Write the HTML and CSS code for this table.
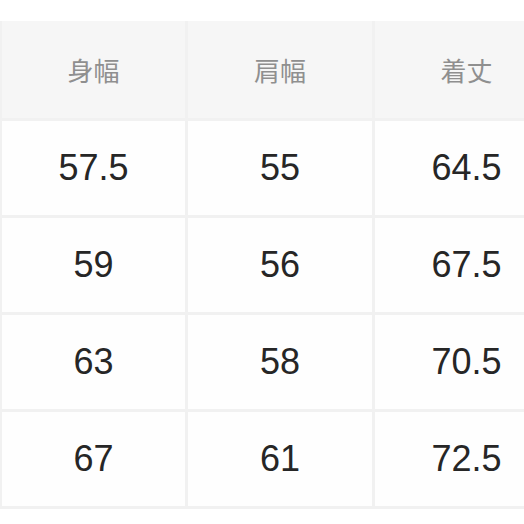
FILE: index.html
```html
<!DOCTYPE html>
<html lang="ja">
<head>
<meta charset="utf-8">
<title>サイズ表</title>
<link rel="stylesheet" href="styles.css">
</head>
<body>
<div class="frame">
  <div class="table">
    <div class="cell head">身幅</div>
    <div class="cell head">肩幅</div>
    <div class="cell head">着丈</div>

    <div class="cell">57.5</div>
    <div class="cell">55</div>
    <div class="cell">64.5</div>

    <div class="cell">59</div>
    <div class="cell">56</div>
    <div class="cell">67.5</div>

    <div class="cell">63</div>
    <div class="cell">58</div>
    <div class="cell">70.5</div>

    <div class="cell">67</div>
    <div class="cell">61</div>
    <div class="cell">72.5</div>
  </div>
</div>
</body>
</html>
```
FILE: styles.css
```css
html, body {
  margin: 0;
  padding: 0;
  background: #ffffff;
}

.frame {
  width: 100%;
  overflow: hidden;
  padding-top: 21px;
}

.table {
  width: 553px;
  display: grid;
  grid-template-columns: 183px 184px 183px;
  grid-template-rows: 97px 94px 94px 94px 94px;
  gap: 3px;
  padding: 0 0 3px 2px;
  background: #f1f1f1;
}

.cell {
  display: flex;
  align-items: center;
  justify-content: center;
  background: #fefefe;
  color: #262626;
  font-family: "Liberation Sans", Arial, sans-serif;
  font-size: 36px;
}

.head {
  background: #f6f6f6;
  color: #8f8f8f;
  font-family: "Noto Sans CJK JP", "Noto Sans", sans-serif;
  font-size: 26px;
}
```
